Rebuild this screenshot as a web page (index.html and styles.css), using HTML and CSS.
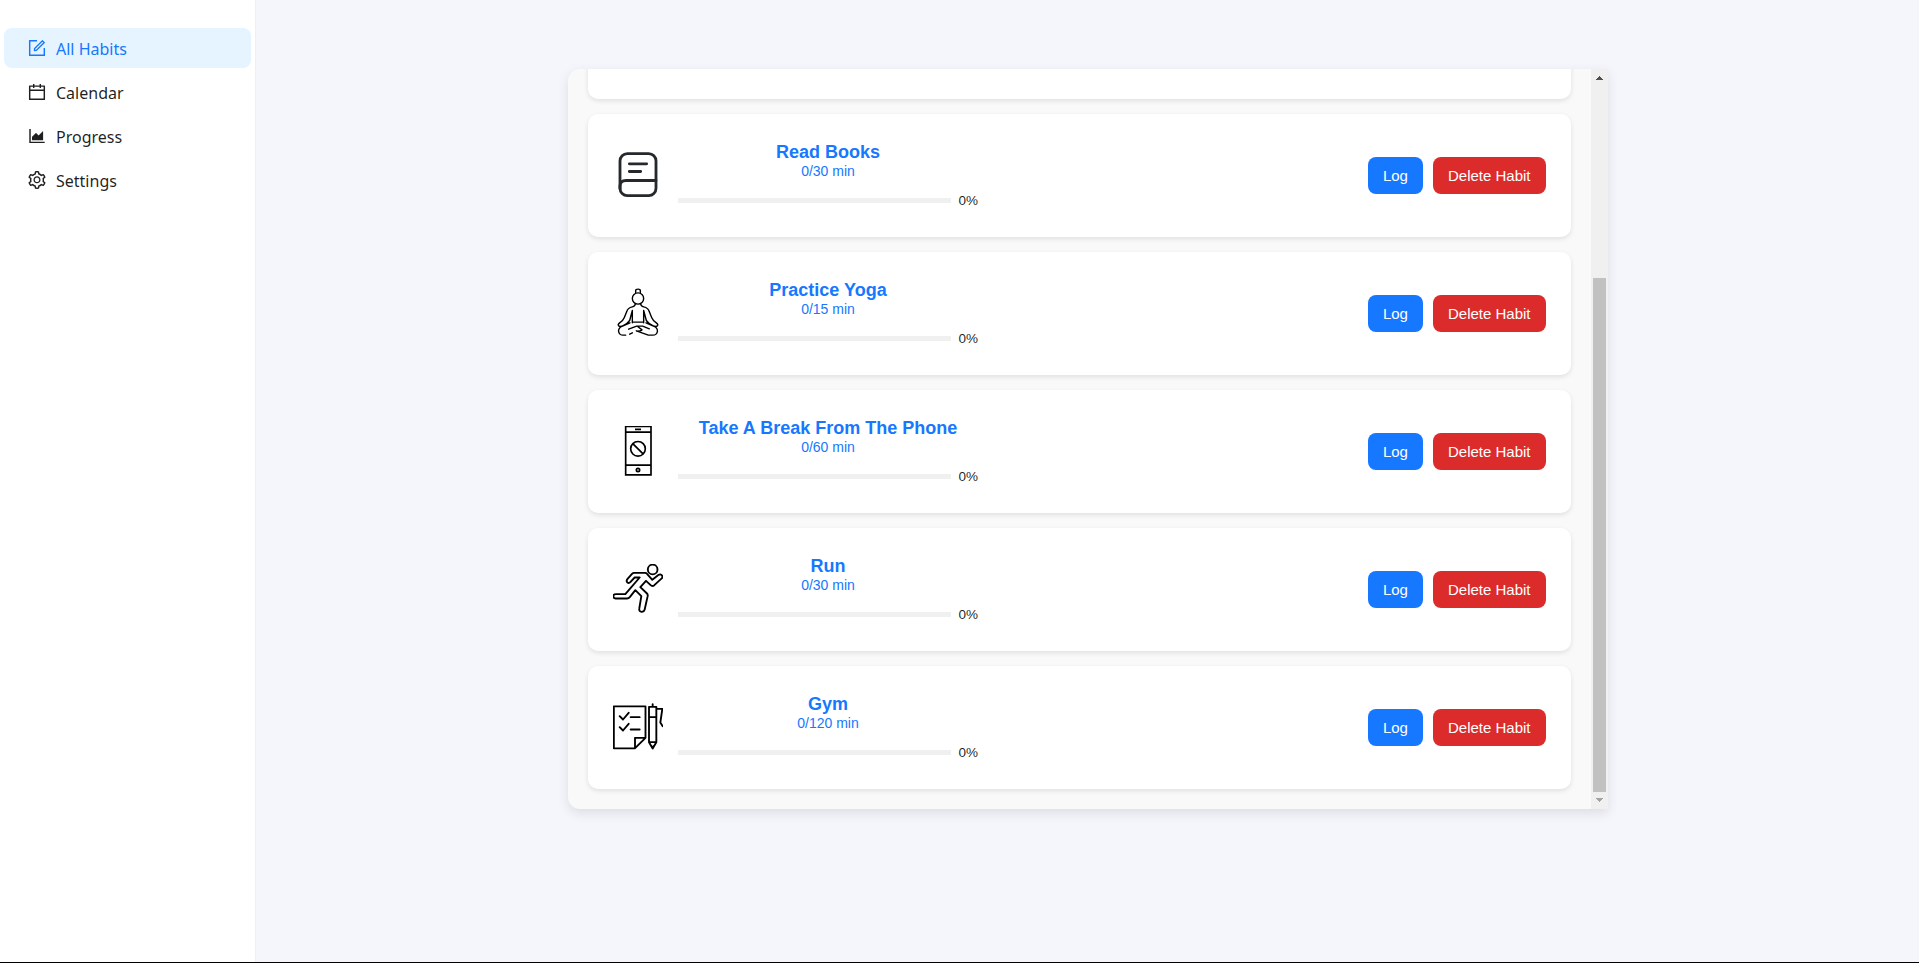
FILE: index.html
```html
<!DOCTYPE html>
<html lang="en">
<head>
<meta charset="utf-8">
<title>All Habits</title>
<link rel="stylesheet" href="styles.css">
</head>
<body>
<div class="app">
  <nav class="sidebar">
    <a class="menu-item active"><svg class="menu-icon" viewBox="64 64 896 896"><path d="M904 512h-56c-4.4 0-8 3.6-8 8v320H184V184h320c4.4 0 8-3.6 8-8v-56c0-4.4-3.6-8-8-8H144c-17.7 0-32 14.3-32 32v736c0 17.7 14.3 32 32 32h736c17.7 0 32-14.3 32-32V520c0-4.4-3.6-8-8-8z"/><path d="M355.9 534.9L354 653.8c-.1 8.9 7.1 16.2 16 16.2h.4l118-2.9c2-.1 4-.9 5.4-2.3l415.9-415c3.1-3.1 3.1-8.2 0-11.3L785.4 114.3c-1.6-1.6-3.6-2.3-5.7-2.3s-4.1.8-5.7 2.3l-415.8 415a8.3 8.3 0 00-2.3 5.6zm63.5 23.6L779.7 199l45.2 45.1-360.5 359.7-45.7 1.1.7-46.4z"/></svg><span>All Habits</span></a>
    <a class="menu-item"><svg class="menu-icon" viewBox="64 64 896 896"><path d="M880 184H712v-64c0-4.400-3.600-8-8-8h-56c-4.400 0-8 3.600-8 8v64H384v-64c0-4.400-3.600-8-8-8h-56c-4.400 0-8 3.600-8 8v64H144c-17.700 0-32 14.300-32 32v664c0 17.700 14.300 32 32 32h736c17.700 0 32-14.300 32-32V216c0-17.700-14.300-32-32-32zm-40 656H184V460h656v380zM184 392V256h128v48c0 4.400 3.600 8 8 8h56c4.400 0 8-3.600 8-8v-48h256v48c0 4.400 3.600 8 8 8h56c4.400 0 8-3.600 8-8v-48h128v136H184z"/></svg><span>Calendar</span></a>
    <a class="menu-item"><svg class="menu-icon" viewBox="64 64 896 896"><path d="M888 792H200V168c0-4.400-3.600-8-8-8h-56c-4.400 0-8 3.600-8 8v688c0 4.400 3.600 8 8 8h752c4.400 0 8-3.600 8-8v-56c0-4.400-3.600-8-8-8zm-616-64h536c4.400 0 8-3.600 8-8V284c0-7.200-8.700-10.700-13.700-5.700L592 488.600l-125.400-124a8.030 8.030 0 00-11.300 0l-189 189.600a7.870 7.870 0 00-2.300 5.600V720c0 4.400 3.600 8 8 8z"/></svg><span>Progress</span></a>
    <a class="menu-item"><svg class="menu-icon" viewBox="64 64 896 896"><path d="M924.8 625.7l-65.5-56c3.1-19 4.7-38.4 4.7-57.8s-1.6-38.8-4.700-57.8l65.5-56a32.03 32.03 0 009.3-35.2l-.9-2.6a443.74 443.74 0 00-79.7-137.9l-1.8-2.1a32.12 32.12 0 00-35.1-9.5l-81.3 28.9c-30-24.6-63.5-44-99.7-57.6l-15.7-85a32.05 32.05 0 00-25.8-25.7l-2.7-.5c-52.1-9.4-106.9-9.4-159 0l-2.7.5a32.05 32.05 0 00-25.8 25.7l-15.8 85.4a351.86 351.86 0 00-99 57.4l-81.9-29.1a32 32 0 00-35.1 9.5l-1.8 2.1a446.02 446.02 0 00-79.7 137.9l-.9 2.6c-4.5 12.5-.8 26.5 9.3 35.2l66.3 56.6c-3.1 18.8-4.6 38-4.6 57.1 0 19.2 1.5 38.4 4.6 57.1L99 625.5a32.03 32.03 0 00-9.3 35.2l.9 2.6c18.1 50.4 44.9 96.9 79.7 137.9l1.8 2.1a32.12 32.12 0 0035.1 9.5l81.9-29.1c29.8 24.5 63.1 43.9 99 57.4l15.8 85.4a32.05 32.05 0 0025.8 25.7l2.7.5a449.4 449.4 0 00159 0l2.7-.5a32.05 32.05 0 0025.8-25.7l15.7-85a350 350 0 0099.7-57.6l81.3 28.9a32 32 0 0035.1-9.5l1.8-2.1c34.8-41.1 61.6-87.5 79.7-137.9l.9-2.6c4.5-12.3.8-26.3-9.3-35zM788.3 465.9c2.5 15.1 3.8 30.6 3.8 46.1s-1.3 31-3.8 46.1l-6.6 40.1 74.7 63.9a370.03 370.03 0 01-42.6 73.6L721 702.8l-31.4 25.8c-23.9 19.6-50.5 35-79.3 45.8l-38.1 14.3-17.9 97a377.5 377.5 0 01-85 0l-17.9-97.2-37.8-14.5c-28.5-10.8-55-26.2-78.7-45.7l-31.4-25.9-93.4 33.2c-17-22.9-31.2-47.6-42.6-73.6l75.5-64.5-6.5-40c-2.4-14.9-3.7-30.3-3.7-45.5 0-15.3 1.2-30.6 3.7-45.5l6.5-40-75.5-64.5c11.3-26.1 25.6-50.7 42.6-73.6l93.4 33.2 31.4-25.9c23.7-19.5 50.2-34.9 78.7-45.7l37.9-14.3 17.9-97.2c28.1-3.2 56.8-3.2 85 0l17.9 97 38.1 14.3c28.7 10.8 55.4 26.2 79.3 45.8l31.4 25.8 92.8-32.9c17 22.9 31.2 47.6 42.6 73.6L781.8 426l6.5 39.9zM512 326c-97.2 0-176 78.8-176 176s78.8 176 176 176 176-78.8 176-176-78.8-176-176-176zm79.2 255.2A111.6 111.6 0 01512 614c-29.9 0-58-11.7-79.2-32.8A111.6 111.6 0 01400 502c0-29.9 11.7-58 32.8-79.2C454 401.6 482.1 390 512 390c29.9 0 58 11.6 79.2 32.8A111.6 111.6 0 01624 502c0 29.9-11.7 58-32.8 79.2z"/></svg><span>Settings</span></a>
  </nav>
  <main class="content">
    <section class="panel">
      <div class="habit-list">
        <article class="habit"></article>
        <article class="habit">
          <svg class="habit-icon book" viewBox="39 31.5 150 150"><rect x="60" y="42.500" width="108" height="126" rx="22"/><path d="M60 148v-8q0-17 18-17h90M88 73h52M88 96h34"/></svg>
          <div class="info"><h3>Read Books</h3><p>0/30 min</p><div class="progress"><div class="track"></div><span>0%</span></div></div>
          <div class="actions"><button class="log">Log</button><button class="delete">Delete Habit</button></div>
        </article>
        <article class="habit">
          <svg class="habit-icon yoga" viewBox="39 25.5 150 150"><circle cx="114" cy="57" r="17"/><path d="M107 40v-6q0-5 7-5t7 5v6M106 73q0 7-9 9-14 3-17 15l-7 17q-4 10-14 16-7 5-3 9 4 3 12 0 13-4 21-16l8-30v37M122 73q0 7 9 9 14 3 17 15l7 17q4 10 14 16 7 5 3 9-4 3-12 0-13-4-21-16l-8-30v37M97 128h34M90 130l-26 11q-10 7-8 16 3 10 13 10h8M138 130l26 11q10 7 8 16-3 10-13 10h-14l-36-13M86 149l24-9h18l20 8M113 141l13 10q-3 4-16 4M97 160l-8 4"/></svg>
          <div class="info"><h3>Practice Yoga</h3><p>0/15 min</p><div class="progress"><div class="track"></div><span>0%</span></div></div>
          <div class="actions"><button class="log">Log</button><button class="delete">Delete Habit</button></div>
        </article>
        <article class="habit">
          <svg class="habit-icon phone" viewBox="39 31.5 150 150"><path d="M77 33h76v145H77zM77 50h76M77 149h76M105 41.500h18M99 85l31 31"/><circle cx="114" cy="100" r="22"/><circle cx="114" cy="163.500" r="5"/></svg>
          <div class="info"><h3>Take A Break From The Phone</h3><p>0/60 min</p><div class="progress"><div class="track"></div><span>0%</span></div></div>
          <div class="actions"><button class="log">Log</button><button class="delete">Delete Habit</button></div>
        </article>
        <article class="habit">
          <svg class="habit-icon run" viewBox="39 31.5 150 150"><circle cx="158" cy="48" r="14.500"/><path d="M102 58h33q4 0 6 3l16 18 19-15q5-3 9 1 4 4 1 9l-23 21q-6 5-11 0l-14-13-17 19 20 19q3 3 2 8l-9 40q-2 7-9 7-9-1-7-11l6-36-18-18-16 20q-4 5-9 5H47q-7-1-7-7 0-6 8-6h28l43-50h-15L91 86q-4 4-9 1-4-5 0-10l14-16q3-3 6-3z"/></svg>
          <div class="info"><h3>Run</h3><p>0/30 min</p><div class="progress"><div class="track"></div><span>0%</span></div></div>
          <div class="actions"><button class="log">Log</button><button class="delete">Delete Habit</button></div>
        </article>
        <article class="habit">
          <svg class="habit-icon gym" viewBox="39 31.5 150 150"><path d="M41.500 44.500h95V139l-32 31.500h-63zM136 139h-31v31M59 74l10 10 17-20M92 77h27M59 107l10 10 17-20M92 114h27M147 46h22v106l-11 19-11-19zM158 38v8M147 77h22M147 152h22M154 163l4 7 4-7M169 52h18l-6 41 7 11"/></svg>
          <div class="info"><h3>Gym</h3><p>0/120 min</p><div class="progress"><div class="track"></div><span>0%</span></div></div>
          <div class="actions"><button class="log">Log</button><button class="delete">Delete Habit</button></div>
        </article>
      </div>
      <div class="scrollbar">
        <svg class="arrow up" viewBox="0 0 7 4" shape-rendering="crispEdges"><path d="M3 0h1v1H3zM2 1h3v1H2zM1 2h5v1H1zM0 3h7v1H0z"/></svg>
        <div class="thumb"></div>
        <svg class="arrow down" viewBox="0 0 7 4" shape-rendering="crispEdges"><path d="M0 0h7v1H0zM1 1h5v1H1zM2 2h3v1H2zM3 3h1v1H3z"/></svg>
      </div>
    </section>
  </main>
</div>
</body>
</html>
```
FILE: styles.css
```css
* { box-sizing: border-box; }
body {
  margin: 0;
  height: 963px;
  overflow: hidden;
  font-family: "Liberation Sans", Arial, sans-serif;
  background: #f4f6fb;
}
.app {
  display: flex;
  height: 963px;
  border-bottom: 1px solid #000;
}
.sidebar {
  width: 256px;
  padding: 28px 4px 0;
  display: flex;
  flex-direction: column;
  gap: 4px;
  background: #fff;
  border-right: 1px solid #f0f0f0;
}
.menu-item {
  display: flex;
  align-items: center;
  gap: 10px;
  height: 40px;
  padding-left: 24px;
  border-radius: 8px;
  color: rgba(0, 0, 0, 0.88);
  font: 16px/40px "Noto Sans", sans-serif;
}
.menu-item span { padding-top: 1px; }
.menu-item.active { background: #e6f4ff; color: #1677ff; }
.menu-icon { width: 18px; height: 18px; fill: currentColor; }
.content {
  flex: 1;
  display: flex;
  justify-content: center;
  align-items: flex-start;
  padding-top: 69px;
}
.panel {
  display: flex;
  width: 1040px;
  height: 740px;
  overflow: hidden;
  border-radius: 12px 0 0 12px;
  background: #f9f9f9;
  box-shadow: 0 4px 12px rgba(0, 0, 0, 0.1);
}
.habit-list {
  flex: 1;
  display: flex;
  flex-direction: column;
  justify-content: flex-end;
  gap: 15px;
  padding: 0 20px 20px;
}
.habit {
  display: flex;
  align-items: center;
  flex: none;
  height: 123px;
  padding: 0 25px;
  background: #fff;
  border-radius: 10px;
  box-shadow: 0 2px 5px rgba(0, 0, 0, 0.1);
}
.habit-icon {
  width: 50px;
  height: 50px;
  margin: 0 15px 1px 0;
  fill: none;
  stroke: #000;
  stroke-width: 5.6;
  stroke-linecap: round;
  stroke-linejoin: round;
}
.book { stroke: #25282d; stroke-width: 8.5; }
.yoga { stroke-width: 4.2; }
.phone { stroke-width: 5; stroke-linecap: butt; stroke-linejoin: miter; }
.info { width: 300px; padding-top: 2px; text-align: center; color: #1677ff; }
.info h3 { margin: 0 -1px 0 0; font-size: 18px; line-height: 20px; }
.info p { margin: 0 -1px 0 0; font-size: 14px; line-height: 18px; }
.progress {
  display: flex;
  align-items: center;
  gap: 8px;
  margin-top: 9px;
  height: 22px;
  font-size: 13.5px;
  color: rgba(0, 0, 0, 0.88);
}
.track { flex: none; width: 273px; height: 5px; background: #f0f0f0; }
.actions { display: flex; gap: 10px; margin-left: auto; }
.actions button {
  height: 37px;
  padding: 0 15px;
  border: 0;
  border-radius: 8px;
  color: #fff;
  font: 15px "Liberation Sans", Arial, sans-serif;
}
.log { background: #1677ff; }
.delete { background: #dc2b2b; }
.scrollbar {
  width: 17px;
  display: flex;
  flex-direction: column;
  align-items: center;
  background: #f0f0f0;
}
.arrow { width: 7px; height: 4px; }
.up { margin: 7px 0 198px; fill: #505050; }
.thumb { width: 13px; height: 514px; background: #c1c1c1; }
.down { margin-top: 6px; fill: #a3a3a3; }
```
